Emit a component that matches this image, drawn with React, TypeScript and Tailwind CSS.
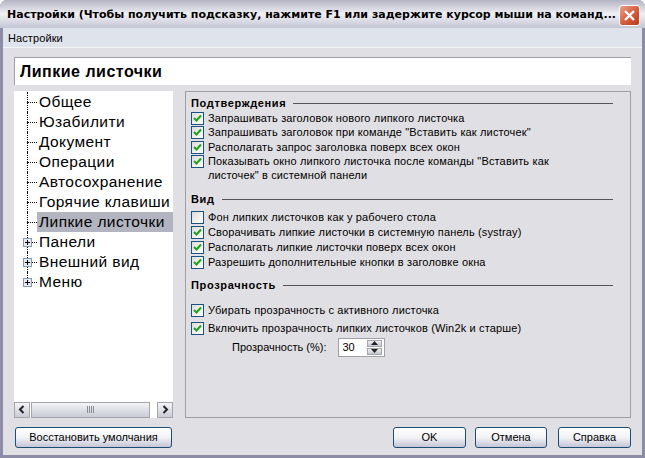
import React from 'react';

const ui = { fontFamily: '"Liberation Sans", Arial, sans-serif' };

function CloseButton() {
  return (
    <div className="w-[21px] h-[21px] rounded-[3px] border border-white bg-gradient-to-br from-[#e8a08a] via-[#d8603f] to-[#b8391c] flex items-center justify-center">
      <svg width="13" height="13" viewBox="0 0 13 13">
        <path d="M2 2 L11 11 M11 2 L2 11" stroke="#fff" strokeWidth="2.4" />
      </svg>
    </div>
  );
}

function Check({ checked = true }: { checked?: boolean }) {
  return (
    <span className="w-[13px] h-[13px] shrink-0 border border-[#1c5180] bg-gradient-to-br from-[#dcdcd7] to-white flex items-center justify-center">
      {checked && (
        <svg width="9" height="9" viewBox="0 0 9 9">
          <path d="M1 4 L3.5 6.5 L8 1.5" fill="none" stroke="#21a121" strokeWidth="2" />
        </svg>
      )}
    </span>
  );
}

function Option({ text, checked = true, className = '' }: { text: React.ReactNode; checked?: boolean; className?: string }) {
  return (
    <div className={`flex gap-[4px] items-start ${className}`}>
      <span className="pt-[1px]"><Check checked={checked} /></span>
      <span className="text-[11px] leading-[14px] tracking-[0.15px] text-black">{text}</span>
    </div>
  );
}

function GroupTitle({ text }: { text: string }) {
  return (
    <div className="flex items-center gap-[7px] h-[13px] mr-[17px]">
      <span className="text-[11px] font-bold leading-[13px] tracking-[0.65px] text-black">{text}</span>
      <span className="flex-1 h-px bg-[#555]" />
    </div>
  );
}

function TreeItem({ label, expander = false, selected = false, last = false }: { label: string; expander?: boolean; selected?: boolean; last?: boolean }) {
  return (
    <div className="relative h-[20px] flex items-center pl-[13px]">
      <span className={`absolute left-[13px] top-0 border-l border-dotted border-black ${last ? 'h-[10px]' : 'h-[20px]'}`} />
      <span className="w-[10px] border-t border-dotted border-black shrink-0" />
      {expander && (
        <span className="absolute left-[9px] top-[6px] w-[9px] h-[9px] border border-[#7f9db9] bg-[#e8e8ee] flex items-center justify-center">
          <svg width="7" height="7" viewBox="0 0 7 7">
            <path d="M1 3.5 H6 M3.5 1 V6" stroke="#000" strokeWidth="1" />
          </svg>
        </span>
      )}
      <span className={`flex-1 text-[15.5px] leading-[20px] px-[2px] tracking-[0.4px] whitespace-nowrap text-black ${selected ? 'bg-[#b2b4bf]' : ''}`}>
        {label}
      </span>
    </div>
  );
}

function ScrollArrow({ dir }: { dir: 'left' | 'right' }) {
  return (
    <div className="w-[16px] h-[16px] border border-[#a5a5ac] bg-gradient-to-b from-[#f4f4f7] to-[#c9cbd6] flex items-center justify-center">
      <svg width="8" height="9" viewBox="0 0 8 9">
        <path d={dir === 'left' ? 'M5.5 1 L2 4.5 L5.5 8' : 'M2.5 1 L6 4.5 L2.5 8'} fill="none" stroke="#222" strokeWidth="2" />
      </svg>
    </div>
  );
}

function Button({ label, className = '' }: { label: string; className?: string }) {
  return (
    <button className={`h-[21px] rounded-[3px] border border-[#1c4d78] bg-gradient-to-b from-white via-[#f2f2f6] to-[#c4c6d6] text-[11px] leading-[17px] text-black ${className}`}>
      {label}
    </button>
  );
}

export default function App() {
  return (
    <div className="w-[645px] h-[458px] overflow-hidden flex flex-col bg-[#8c8ca6] rounded-t-[7px]" style={ui}>
      {/* Title bar */}
      <div className="h-[28px] shrink-0 flex items-center pt-[3px] pl-[7px] pr-[5px] justify-between bg-gradient-to-b from-[#b4b4c4] via-[#f0f0f5] to-[#c4c6d4]">
        <span className="text-[11px] font-bold text-black whitespace-nowrap" style={{ fontFamily: '"DejaVu Sans", sans-serif' }}>
          Настройки (Чтобы получить подсказку, нажмите F1 или задержите курсор мыши на команд...
        </span>
        <CloseButton />
      </div>

      <div className="flex-1 mx-[3px] mb-[3px] flex flex-col bg-[#e0dfe3] min-h-0">
        {/* Menu */}
        <div className="h-[20px] shrink-0 bg-[#dfe3ec] pl-[5px] text-[11px] leading-[20px] tracking-[0.1px] text-black border-b border-[#f4f4f6]">Настройки</div>

        <div className="flex-1 flex flex-col pl-[11px] pr-[11px] pt-[9px] min-h-0">
          {/* Page heading */}
          <div className="h-[28px] shrink-0 bg-white border-l border-t border-[#a0a0a4] pl-[5px] text-[16px] font-bold leading-[28px] tracking-[0.5px] text-black">
            Липкие листочки
          </div>

          <div className="flex gap-[12px] mt-[6px] h-[327px]">
            {/* Tree */}
            <div className="w-[159px] shrink-0 flex flex-col">
              <div className="flex-1 bg-white pt-[1px] overflow-hidden">
                <TreeItem label="Общее" />
                <TreeItem label="Юзабилити" />
                <TreeItem label="Документ" />
                <TreeItem label="Операции" />
                <TreeItem label="Автосохранение" />
                <TreeItem label="Горячие клавиши" />
                <TreeItem label="Липкие листочки" selected />
                <TreeItem label="Панели" expander />
                <TreeItem label="Внешний вид" expander />
                <TreeItem label="Меню" expander last />
              </div>
              <div className="h-[17px] shrink-0 bg-white flex items-center gap-[1px]">
                <ScrollArrow dir="left" />
                <div className="w-[119px] h-[16px] border border-[#a5a5ac] bg-gradient-to-b from-[#f4f4f7] to-[#c9cbd6] flex items-center justify-center">
                  <svg width="8" height="7" viewBox="0 0 8 7">
                    <path d="M0.5 0 V7 M2.5 0 V7 M4.5 0 V7 M6.5 0 V7" stroke="#8a8a94" strokeWidth="1" />
                  </svg>
                </div>
                <div className="w-[5px]" />
                <ScrollArrow dir="right" />
              </div>
            </div>

            {/* Options panel */}
            <div className="flex-1 border border-[#a0a0a4] pl-[5px] pt-[5px]">
              <GroupTitle text="Подтверждения" />
              <div className="mt-[1px] flex flex-col">
                <Option text="Запрашивать заголовок нового липкого листочка" />
                <Option text={'Запрашивать заголовок при команде "Вставить как листочек"'} />
                <Option text="Располагать запрос заголовка поверх всех окон" className="mt-[1px]" />
                <Option text={<>Показывать окно липкого листочка после команды "Вставить как<br />листочек" в системной панели</>} />
              </div>

              <div className="mt-[11px]"><GroupTitle text="Вид" /></div>
              <div className="mt-[4px] flex flex-col gap-[1px]">
                <Option text="Фон липких листочков как у рабочего стола" checked={false} />
                <Option text="Сворачивать липкие листочки в системную панель (systray)" />
                <Option text="Располагать липкие листочки поверх всех окон" />
                <Option text="Разрешить дополнительные кнопки в заголовке окна" />
              </div>

              <div className="mt-[10px]"><GroupTitle text="Прозрачность" /></div>
              <div className="mt-[11px] flex flex-col gap-[3.5px]">
                <Option text="Убирать прозрачность с активного листочка" />
                <Option text="Включить прозрачность липких листочков (Win2k и старше)" />
              </div>
              <div className="mt-[3px] flex items-center pl-[41px] gap-[12px]">
                <span className="text-[11px] text-black">Прозрачность (%):</span>
                <div className="w-[47px] h-[19px] bg-white border border-[#a0a0a8] flex items-center justify-between pl-[3px] pr-[2px]">
                  <span className="text-[11px] text-black">30</span>
                  <div className="flex flex-col gap-px">
                    <span className="w-[15px] h-[7px] bg-gradient-to-b from-[#eeeef2] to-[#c4c6d2] border border-[#a5a5ac] flex items-center justify-center">
                      <svg width="7" height="4" viewBox="0 0 7 4"><path d="M3.5 0 L7 4 H0 Z" fill="#222" /></svg>
                    </span>
                    <span className="w-[15px] h-[7px] bg-gradient-to-b from-[#eeeef2] to-[#c4c6d2] border border-[#a5a5ac] flex items-center justify-center">
                      <svg width="7" height="4" viewBox="0 0 7 4"><path d="M0 0 H7 L3.5 4 Z" fill="#222" /></svg>
                    </span>
                  </div>
                </div>
              </div>
            </div>
          </div>

          {/* Bottom buttons */}
          <div className="flex mt-[9px] pl-[1px]">
            <Button label="Восстановить умолчания" className="w-[157px]" />
            <Button label="OK" className="w-[73px] ml-[221px]" />
            <Button label="Отмена" className="w-[72px] ml-[9px]" />
            <Button label="Справка" className="w-[73px] ml-[11px]" />
          </div>
        </div>
      </div>
    </div>
  );
}
